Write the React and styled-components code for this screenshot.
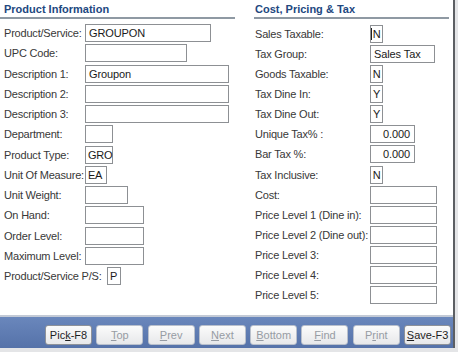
import React from "react";
import styled, { createGlobalStyle } from "styled-components";

const GlobalStyle = createGlobalStyle`
  html, body { margin: 0; padding: 0; background: #e4e5e7; }
  body { font-family: "Liberation Sans", Arial, sans-serif; }
`;

const Window = styled.div`
  width: 453px;
  height: 348px;
  background: #ffffff;
  border-right: 2px solid #5c5f63;
  display: flex;
  flex-direction: column;
`;

const Content = styled.div`
  height: 315px;
  display: flex;
  gap: 19px;
`;

const Panel = styled.section`
  width: ${(p) => p.$width}px;
  display: flex;
  flex-direction: column;
`;

const Header = styled.h2`
  margin: 0;
  padding: 3px 0 1px ${(p) => p.$indent || 0}px;
  height: 13px;
  line-height: 13px;
  font-size: 11px;
  font-weight: bold;
  color: #22487f;
  border-bottom: 2px solid #8f99a3;
`;

const Rows = styled.div`
  display: flex;
  flex-direction: column;
  gap: ${(p) => p.$gap}px;
  padding: ${(p) => p.$top}px 0 0 ${(p) => p.$indent}px;
`;

const Row = styled.div`
  display: flex;
  align-items: center;
  height: 18px;
`;

const Label = styled.label`
  ${(p) => (p.$w ? `width: ${p.$w}px; flex: none;` : `margin-right: 5px;`)}
  font-size: 11px;
  letter-spacing: -0.2px;
  color: #383838;
  white-space: nowrap;
`;

const Field = styled.div`
  box-sizing: border-box;
  width: ${(p) => p.$w}px;
  height: 18px;
  border: 1px solid #8d9094;
  background: #fff;
  font-size: 11px;
  letter-spacing: ${(p) => (p.$w < 30 ? "-0.3px" : "-0.1px")};
  line-height: 16px;
  color: #1a1a1a;
  padding: 0 ${(p) => (p.$align === "right" ? 4 : p.$w < 30 ? 1 : 3)}px 0
    ${(p) => (p.$w < 30 ? 2 : 3)}px;
  text-align: ${(p) => p.$align || "left"};
  white-space: nowrap;
  overflow: visible;
`;

const Caret = styled.span`
  display: inline-block;
  width: 1px;
  height: 12px;
  background: #222;
  vertical-align: -2px;
  margin-left: -2px;
  margin-right: 1px;
`;

const Bar = styled.div`
  height: 33px;
  box-sizing: border-box;
  border-top: 2px solid #c3cad6;
  background: linear-gradient(#6a87bc, #5572a9);
  display: flex;
  align-items: flex-start;
  gap: 4.3px;
  padding: 8px 0 0 45px;
`;

const Button = styled.button`
  box-sizing: border-box;
  width: 47px;
  height: 20px;
  padding: 0;
  border: 1px solid ${(p) => (p.$active ? "#8e9299" : "#b9c0cc")};
  border-radius: 3px;
  background: linear-gradient(#fbfbfb, #e7e8ea);
  font-family: "Liberation Sans", Arial, sans-serif;
  font-size: 11px;
  color: ${(p) => (p.$active ? "#1e1e1e" : "#979ca3")};
  line-height: 18px;
  u { text-decoration-thickness: 1px; text-underline-offset: 1px; }
`;

const left = [
  { label: "Product/Service:", w: 126, v: "GROUPON" },
  { label: "UPC Code:", w: 102 },
  { label: "Description 1:", w: 144, v: "Groupon" },
  { label: "Description 2:", w: 144 },
  { label: "Description 3:", w: 144 },
  { label: "Department:", w: 28 },
  { label: "Product Type:", w: 28, v: "GRO" },
  { label: "Unit Of Measure:", w: 22, v: "EA" },
  { label: "Unit Weight:", w: 43 },
  { label: "On Hand:", w: 59 },
  { label: "Order Level:", w: 59 },
  { label: "Maximum Level:", w: 59 },
  { label: "Product/Service P/S:", w: 14, v: "P", auto: true },
];

const right = [
  { label: "Sales Taxable:", w: 13, v: "N", caret: true },
  { label: "Tax Group:", w: 65, v: "Sales Tax" },
  { label: "Goods Taxable:", w: 13, v: "N" },
  { label: "Tax Dine In:", w: 13, v: "Y" },
  { label: "Tax Dine Out:", w: 13, v: "Y" },
  { label: "Unique Tax% :", w: 45, v: "0.000", align: "right" },
  { label: "Bar Tax %:", w: 45, v: "0.000", align: "right" },
  { label: "Tax Inclusive:", w: 13, v: "N" },
  { label: "Cost:", w: 67 },
  { label: "Price Level 1 (Dine in):", w: 67 },
  { label: "Price Level 2 (Dine out):", w: 67 },
  { label: "Price Level 3:", w: 67 },
  { label: "Price Level 4:", w: 67 },
  { label: "Price Level 5:", w: 67 },
];

const buttons = [
  { pre: "Pic", u: "k", post: "-F8", active: true },
  { pre: "", u: "T", post: "op" },
  { pre: "", u: "P", post: "rev" },
  { pre: "", u: "N", post: "ext" },
  { pre: "", u: "B", post: "ottom" },
  { pre: "", u: "F", post: "ind" },
  { pre: "P", u: "r", post: "int" },
  { pre: "", u: "S", post: "ave-F3", active: true },
];

const narrowPad = (w) => (w <= 14 ? { padding: 0, textAlign: "center" } : undefined);

export default function App() {
  return (
    <>
      <GlobalStyle />
      <Window>
        <Content>
          <Panel $width={235}>
            <Header $indent={4}>Product Information</Header>
            <Rows $gap={2.25} $top={5} $indent={4}>
              {left.map((r) => (
                <Row key={r.label}>
                  <Label $w={r.auto ? 0 : 81}>{r.label}</Label>
                  <Field $w={r.w} style={narrowPad(r.w)}>{r.v}</Field>
                </Row>
              ))}
            </Rows>
          </Panel>
          <Panel $width={195}>
            <Header $indent={1}>Cost, Pricing &amp; Tax</Header>
            <Rows $gap={2.08} $top={6} $indent={1}>
              {right.map((r) => (
                <Row key={r.label}>
                  <Label $w={115}>{r.label}</Label>
                  <Field $w={r.w} $align={r.align} style={narrowPad(r.w)}>
                    {r.caret && <Caret />}
                    {r.v}
                  </Field>
                </Row>
              ))}
            </Rows>
          </Panel>
        </Content>
        <Bar>
          {buttons.map((b, i) => (
            <Button key={i} $active={b.active}>
              {b.pre}
              <u>{b.u}</u>
              {b.post}
            </Button>
          ))}
        </Bar>
      </Window>
    </>
  );
}
